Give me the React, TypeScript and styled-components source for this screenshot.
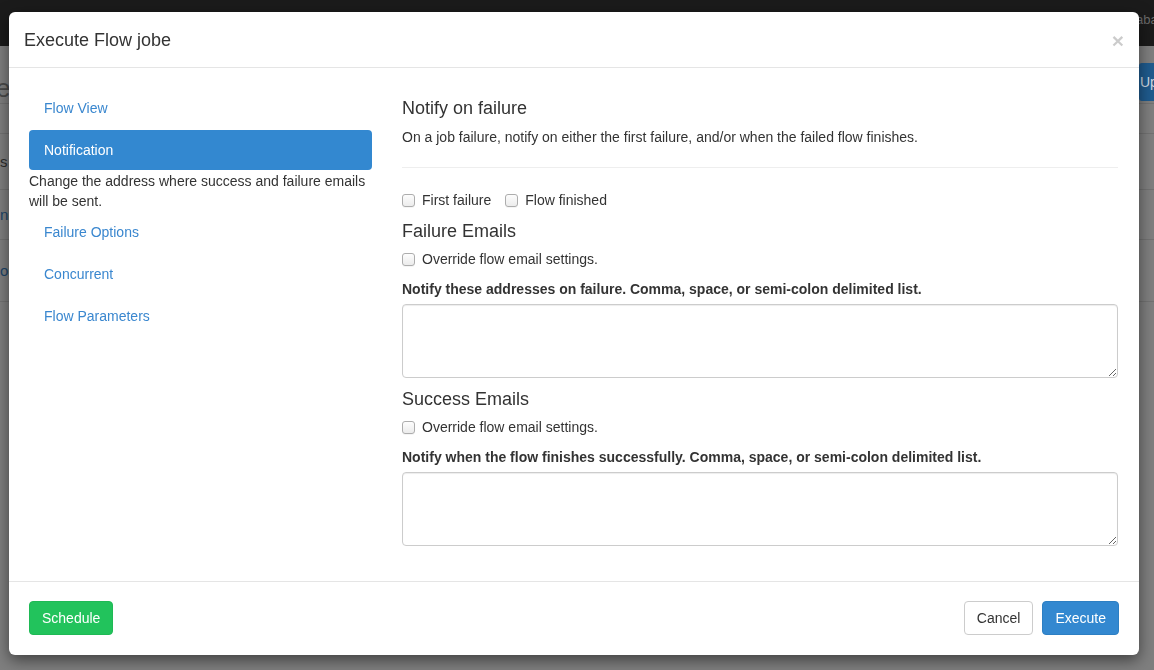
import React from 'react'
import styled, { createGlobalStyle } from 'styled-components'

const GlobalStyle = createGlobalStyle`
  html, body {
    margin: 0;
    padding: 0;
    height: 100%;
    overflow: hidden;
  }
  body {
    font-family: "Liberation Sans", Arial, sans-serif;
    font-size: 14px;
    line-height: 20px;
    color: #333;
    background: #7f7f7f;
  }
  * {
    box-sizing: border-box;
  }
`

// page behind the dialog, already dimmed by the backdrop
const Page = styled.div`
  display: flex;
  flex-direction: column;
  height: 670px;
  overflow: hidden;
  background: #7f7f7f;
`

const Navbar = styled.div`
  display: flex;
  align-items: center;
  justify-content: space-between;
  height: 46px;
  padding: 0 0 6px 0;
  background: #1b1b1b;
  color: #6b6b6b;
  font-size: 13px;
`

const NavUser = styled.span`
  margin-right: -11px;
`

const PageHeader = styled.div`
  display: flex;
  align-items: center;
  justify-content: space-between;
  height: 58px;
  border-bottom: 1px solid #727272;
`

const PageTitle = styled.h1`
  margin: 26px 0 0 -4px;
  font-size: 26px;
  font-weight: 500;
  color: #4a4a4a;
`

const PageButton = styled.div`
  margin-top: 14px;
  margin-right: -64px;
  width: 79px;
  height: 38px;
  padding: 0 0 0 1px;
  display: flex;
  align-items: center;
  background: #1f5b8e;
  color: #cfd9e3;
  font-size: 14px;
  border-radius: 3px;
`

const PageRow = styled.div<{ $h: number; $link?: boolean }>`
  display: flex;
  align-items: center;
  height: ${p => p.$h}px;
  border-bottom: 1px solid #727272;
  font-size: 15px;
  color: ${p => (p.$link ? '#1c4468' : '#2d2d2d')};
`

const Overlay = styled.div`
  position: fixed;
  inset: 0;
  padding: 12px 0 0 9px;
`

const Modal = styled.div`
  width: 1130px;
  background: #fff;
  border-radius: 6px;
  box-shadow: 0 5px 15px rgba(0, 0, 0, 0.5);
  display: flex;
  flex-direction: column;
`

const Header = styled.div`
  display: flex;
  align-items: center;
  justify-content: space-between;
  padding: 15px 15px 14px;
  border-bottom: 1px solid #e5e5e5;
`

const Title = styled.h4`
  margin: 0;
  font-size: 18px;
  font-weight: 500;
  line-height: 26px;
  color: #333;
`

const Close = styled.button`
  border: 0;
  background: none;
  padding: 0;
  font-family: "Liberation Sans", Arial, sans-serif;
  font-size: 21px;
  font-weight: 700;
  line-height: 1;
  color: #000;
  opacity: 0.2;
  cursor: pointer;
`

const Body = styled.div`
  display: grid;
  grid-template-columns: 343px 1fr;
  column-gap: 30px;
  padding: 20px 21px 35px 20px;
  align-items: start;
`

const Nav = styled.ul`
  list-style: none;
  margin: 0;
  padding: 0;
  display: flex;
  flex-direction: column;
  gap: 2px;
`

const NavItem = styled.li<{ $active?: boolean }>`
  height: 40px;
  display: flex;
  align-items: center;
  padding: 0 15px;
  border-radius: 4px;
  font-size: 14px;
  color: ${p => (p.$active ? '#fff' : '#3a87cf')};
  background: ${p => (p.$active ? '#3388d0' : 'transparent')};
  cursor: pointer;
`

const NavHelp = styled.li`
  margin: -1px 0 -1px;
  font-size: 14px;
  line-height: 20px;
  color: #333;
`

const Content = styled.div`
  display: flex;
  flex-direction: column;
`

const Heading = styled.h4<{ $top?: number }>`
  margin: ${p => p.$top ?? 10}px 0 8px;
  font-size: 18px;
  font-weight: 500;
  line-height: 20px;
  color: #333;
`

const Lead = styled.p`
  margin: 1px 0 0;
  font-size: 14px;
  line-height: 20px;
`

const Rule = styled.hr`
  margin: 20px 0 22px;
  border: 0;
  border-top: 1px solid #eee;
  width: 100%;
`

const CheckRow = styled.div`
  display: flex;
  align-items: center;
  gap: 14px;
  height: 20px;
`

const Check = styled.label`
  display: inline-flex;
  align-items: center;
  gap: 7px;
  font-size: 14px;
  color: #333;
  cursor: pointer;
`

const Box = styled.input`
  appearance: none;
  margin: 0;
  width: 13px;
  height: 13px;
  border: 1px solid #adadad;
  border-radius: 3px;
  background: linear-gradient(#fdfdfd, #ececec);
  box-shadow: 0 1px 0 rgba(0, 0, 0, 0.04);
`

const FieldLabel = styled.label`
  display: block;
  margin: 10px 0 5px;
  font-size: 14px;
  font-weight: 700;
  line-height: 20px;
  color: #333;
`

const TextArea = styled.textarea`
  display: block;
  width: 100%;
  height: 74px;
  padding: 6px 12px;
  border: 1px solid #ccc;
  border-radius: 4px;
  box-shadow: inset 0 1px 1px rgba(0, 0, 0, 0.075);
  font-family: "Liberation Sans", Arial, sans-serif;
  font-size: 14px;
  resize: vertical;
  outline: none;
`

const Footer = styled.div`
  display: flex;
  align-items: center;
  justify-content: space-between;
  padding: 19px 20px 20px;
  border-top: 1px solid #e5e5e5;
`

const Actions = styled.div`
  display: flex;
  gap: 9px;
`

const Button = styled.button<{ $kind: 'success' | 'primary' | 'default' }>`
  height: 34px;
  padding: 6px 12px;
  font-family: "Liberation Sans", Arial, sans-serif;
  font-size: 14px;
  line-height: 20px;
  border-radius: 4px;
  border: 1px solid
    ${p => (p.$kind === 'success' ? '#1fb955' : p.$kind === 'primary' ? '#2d7fc3' : '#ccc')};
  background: ${p => (p.$kind === 'success' ? '#22c35c' : p.$kind === 'primary' ? '#3388d0' : '#fff')};
  color: ${p => (p.$kind === 'default' ? '#333' : '#fff')};
  cursor: pointer;
`

const navItems = ['Flow View', 'Notification', 'Failure Options', 'Concurrent', 'Flow Parameters']

const App = () => {
  return (
    <>
      <GlobalStyle />
      <Page>
        <Navbar>
          <span />
          <NavUser>azkaban</NavUser>
        </Navbar>
        <PageHeader>
          <PageTitle>executions</PageTitle>
          <PageButton>Upload</PageButton>
        </PageHeader>
        <PageRow $h={30} />
        <PageRow $h={56}>s</PageRow>
        <PageRow $h={50} $link>n</PageRow>
        <PageRow $h={62} $link>o</PageRow>
      </Page>

      <Overlay>
        <Modal>
          <Header>
            <Title>Execute Flow jobe</Title>
            <Close>×</Close>
          </Header>

          <Body>
            <Nav>
              {navItems.map(item => (
                <React.Fragment key={item}>
                  <NavItem $active={item === 'Notification'}>{item}</NavItem>
                  {item === 'Notification' && (
                    <NavHelp>Change the address where success and failure emails will be sent.</NavHelp>
                  )}
                </React.Fragment>
              ))}
            </Nav>

            <Content>
              <Heading $top={10}>Notify on failure</Heading>
              <Lead>On a job failure, notify on either the first failure, and/or when the failed flow finishes.</Lead>
              <Rule />
              <CheckRow>
                <Check><Box type="checkbox" />First failure</Check>
                <Check><Box type="checkbox" />Flow finished</Check>
              </CheckRow>

              <Heading $top={11}>Failure Emails</Heading>
              <CheckRow>
                <Check><Box type="checkbox" />Override flow email settings.</Check>
              </CheckRow>
              <FieldLabel>Notify these addresses on failure. Comma, space, or semi-colon delimited list.</FieldLabel>
              <TextArea />

              <Heading $top={11}>Success Emails</Heading>
              <CheckRow>
                <Check><Box type="checkbox" />Override flow email settings.</Check>
              </CheckRow>
              <FieldLabel>Notify when the flow finishes successfully. Comma, space, or semi-colon delimited list.</FieldLabel>
              <TextArea />
            </Content>
          </Body>

          <Footer>
            <Button $kind="success">Schedule</Button>
            <Actions>
              <Button $kind="default">Cancel</Button>
              <Button $kind="primary">Execute</Button>
            </Actions>
          </Footer>
        </Modal>
      </Overlay>
    </>
  )
}

export default App
